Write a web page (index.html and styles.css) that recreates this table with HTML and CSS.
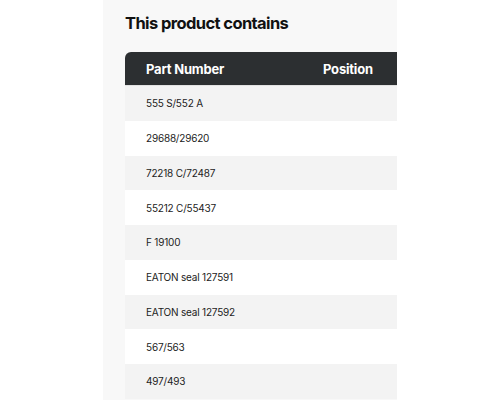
FILE: index.html
```html
<!DOCTYPE html>
<html>
<head>
<meta charset="utf-8">
<link rel="stylesheet" href="styles.css">
</head>
<body>
<div class="panel">
  <h2 class="title">This product contains</h2>
  <div class="table-wrap">
    <table class="parts">
      <thead>
        <tr><th class="col-part">Part Number</th><th class="col-pos">Position</th></tr>
      </thead>
      <tbody>
        <tr><td>555 S/552 A</td><td></td></tr>
        <tr><td>29688/29620</td><td></td></tr>
        <tr><td>72218 C/72487</td><td></td></tr>
        <tr><td>55212 C/55437</td><td></td></tr>
        <tr><td>F 19100</td><td></td></tr>
        <tr><td>EATON seal 127591</td><td></td></tr>
        <tr><td>EATON seal 127592</td><td></td></tr>
        <tr><td>567/563</td><td></td></tr>
        <tr><td>497/493</td><td></td></tr>
      </tbody>
    </table>
  </div>
</div>
</body>
</html>
```
FILE: styles.css
```css
html, body {
  margin: 0;
  padding: 0;
  background: #ffffff;
  font-family: Inter, "Noto Sans", sans-serif;
}
.panel {
  margin-left: 103px;
  width: 294px;
  height: 400px;
  background: #f8f8f8;
  padding: 12px 0 0 22px;
  box-sizing: border-box;
  overflow: hidden;
}
.title {
  margin: 0 0 18px 0;
  font-size: 16.5px;
  font-weight: 700;
  color: #111;
  letter-spacing: -0.6px;
  line-height: 22px;
}
.table-wrap {
  overflow: hidden;
}
.parts {
  border-collapse: collapse;
  width: 300px;
  font-size: 10px;
  color: #222;
}
.parts th {
  background: #2c2f31;
  color: #fff;
  font-size: 13px;
  font-weight: 700;
  text-align: left;
  height: 33px;
  padding: 0;
  letter-spacing: -0.2px;
  border-bottom: 1px solid #e2e2e2;
}
.parts th.col-part {
  padding-left: 21px;
  width: 177px;
  border-top-left-radius: 6px;
}
.parts td {
  height: 34.75px;
  padding: 0 0 0 21px;
  letter-spacing: -0.2px;
}
.parts td + td { padding: 0; }
.parts tbody tr:nth-child(odd) td { background: #f3f3f3; }
.parts tbody tr:nth-child(even) td { background: #ffffff; }
```
